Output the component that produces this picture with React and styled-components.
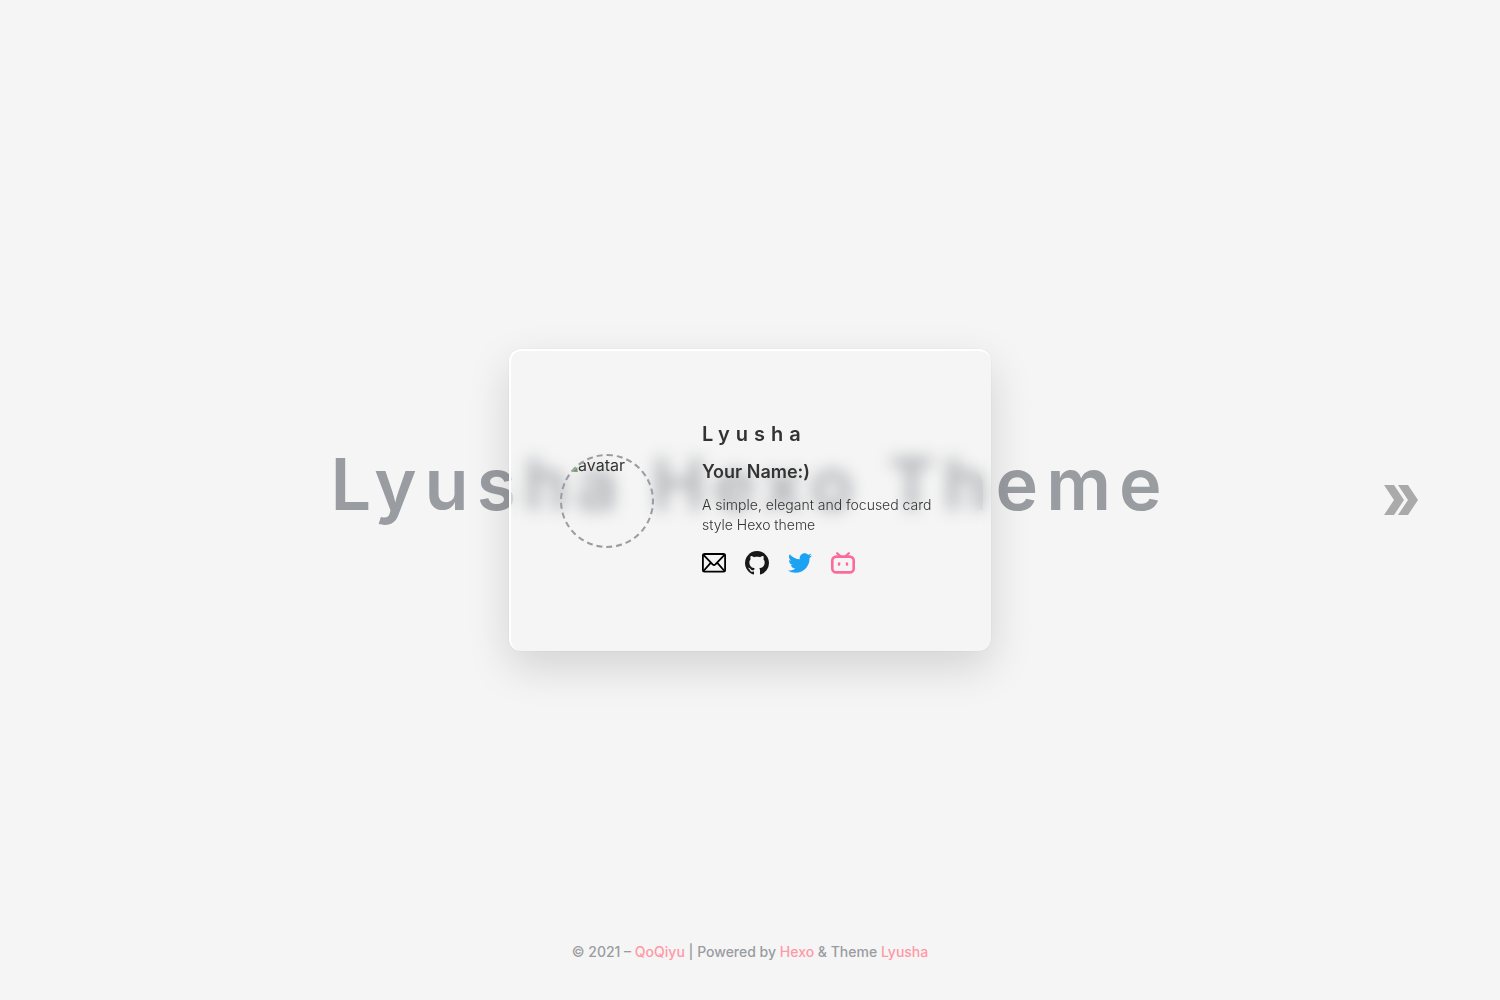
import React from "react";
import styled, { createGlobalStyle } from "styled-components";
import { BsGithub } from "react-icons/bs";
import { FaTwitter } from "react-icons/fa";

const GlobalStyle = createGlobalStyle`
  * { box-sizing: border-box; }
  body {
    margin: 0;
    background: #f5f5f5;
    color: #333;
    font-family: Inter, "Liberation Sans", sans-serif;
    font-size: 16px;
  }
  h1, h2, h3, p { margin: 0; }
  a { text-decoration: none; }
`;

const Page = styled.div`
  display: grid;
  grid-template: minmax(100vh, auto) / minmax(0, 1fr);
  > * { grid-area: 1 / 1; }
`;

const Backdrop = styled.h1`
  align-self: center;
  padding-bottom: 32px;
  color: #999ca1;
  font-size: 72px;
  font-weight: 600;
  line-height: 88px;
  letter-spacing: 8px;
  text-align: center;
`;

const Card = styled.main`
  place-self: center;
  display: flex;
  align-items: center;
  gap: 48px;
  width: 482px;
  max-width: 100%;
  min-height: 302px;
  padding: 0 49px;
  border-top: 2px solid #fff;
  border-left: 2px solid #fff;
  border-radius: 12px;
  background: rgba(246, 246, 246, 0.2);
  backdrop-filter: blur(8px);
  box-shadow: 0 0 1px rgba(0, 0, 0, 0.2), 0 16px 44px rgba(0, 0, 0, 0.14);
`;

const Avatar = styled.div`
  display: flex;
  flex: none;
  width: 94px;
  height: 94px;
  border: 2px dashed #999ca1;
  border-radius: 50%;
  overflow: hidden;
  line-height: 18px;
`;

const Profile = styled.section`
  flex: 1;
  min-width: 0;
  padding-bottom: 5px;
`;

const SiteName = styled.h2`
  font-size: 20px;
  font-weight: 600;
  line-height: 24px;
  letter-spacing: 6px;
`;

const Author = styled.h3`
  margin-top: 14px;
  font-size: 18px;
  font-weight: 600;
  line-height: 24px;
`;

const Description = styled.p`
  margin-top: 11px;
  font-size: 14px;
  font-weight: 300;
  line-height: 20px;
`;

const Socials = styled.nav`
  display: flex;
  gap: 19px;
  margin-top: 16px;
`;

const SocialLink = styled.a`
  display: flex;
  color: ${(p) => p.$color};
  svg { width: 24px; height: 24px; }
`;

const NextLink = styled.a`
  place-self: center end;
  display: flex;
  margin-right: 82px;
  color: #aaa;
`;

const Footer = styled.footer`
  align-self: end;
  padding-bottom: 38px;
  color: #999ca1;
  font-size: 14px;
  font-weight: 500;
  line-height: 20px;
  text-align: center;
  a { color: #ff99a6; }
`;

function BrokenImage() {
  return (
    <svg width="16" height="16" viewBox="0 0 16 16" aria-hidden="true">
      <path d="M1 1h10l4 4v10H1z" fill="#c4d7f5" stroke="#999" />
      <path d="M2 15v-2l5-6 4 4 4-2v6z" fill="#58aa45" />
      <path d="M1 15.5h15" stroke="#999" />
      <path d="M11 1v4h4" fill="#fff" stroke="#999" />
    </svg>
  );
}

function MailIcon() {
  return (
    <svg viewBox="0 0 24 24" fill="none" stroke="currentColor" strokeWidth="1.8" strokeLinejoin="round">
      <rect x="0.9" y="3" width="22.2" height="17.6" rx="1.6" />
      <path d="M1.5 3.8 10.6 13.4q1.4 1.2 2.8 0L22.5 3.8M1.5 20l7.4-8.4M22.5 20l-7.4-8.4" />
    </svg>
  );
}

function BilibiliIcon() {
  return (
    <svg viewBox="0 0 24 24" fill="none" stroke="currentColor" strokeWidth="2.6" strokeLinecap="round">
      <rect x="1.3" y="5.6" width="21.4" height="15.8" rx="4" />
      <path d="M6.2 2.2 9.4 5.2M17.8 2.2 14.6 5.2" strokeWidth="2.2" />
      <path d="M8.2 12.4l-.3 1.2M15.8 12.4l.3 1.2" strokeWidth="2.4" />
    </svg>
  );
}

export default function App() {
  return (
    <>
      <GlobalStyle />
      <Page>
        <Backdrop>Lyusha Hexo Theme</Backdrop>
        <Card>
          <Avatar role="img" aria-label="avatar">
            <BrokenImage />
            avatar
          </Avatar>
          <Profile>
            <SiteName>Lyusha</SiteName>
            <Author>Your Name:)</Author>
            <Description>A simple, elegant and focused card style Hexo theme</Description>
            <Socials>
              <SocialLink href="#mail" aria-label="Mail" $color="#000"><MailIcon /></SocialLink>
              <SocialLink href="#github" aria-label="GitHub" $color="#191717"><BsGithub /></SocialLink>
              <SocialLink href="#twitter" aria-label="Twitter" $color="#1da1f2"><FaTwitter /></SocialLink>
              <SocialLink href="#bilibili" aria-label="Bilibili" $color="#fb6a9b"><BilibiliIcon /></SocialLink>
            </Socials>
          </Profile>
        </Card>
        <NextLink href="#posts" aria-label="Next">
          <svg width="34" height="30" viewBox="0 0 34 30" fill="currentColor">
            <path d="M0 0h10l10 15-10 15H0l10-15zM14 0h10l10 15-10 15H14l10-15z" />
          </svg>
        </NextLink>
        <Footer>
          © 2021 – <a href="#author">QoQiyu</a> | Powered by <a href="#hexo">Hexo</a> &amp; Theme <a href="#theme">Lyusha</a>
        </Footer>
      </Page>
    </>
  );
}
